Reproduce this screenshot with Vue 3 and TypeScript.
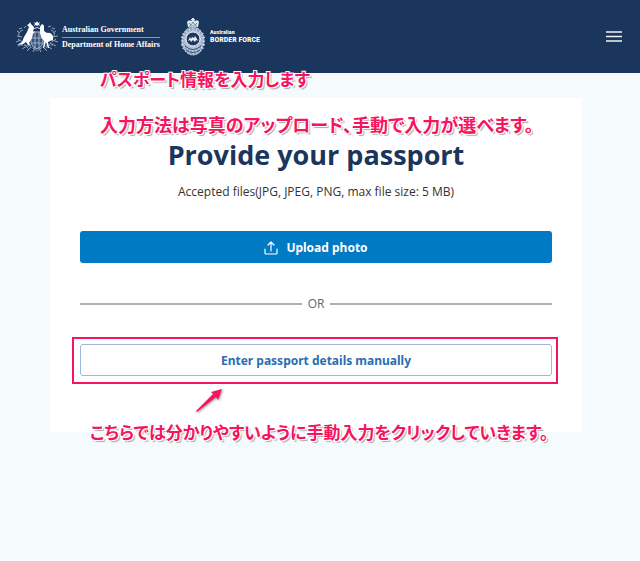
<script setup lang="ts">
import { ref } from 'vue'

const menuOpen = ref(false)
const beads: number[] = Array.from({ length: 20 }, (_, i) => i * 18)
</script>

<template>
  <div class="page">
    <header class="header">
      <div class="brands">
        <a class="brand gov" href="#">
          <svg class="crest" viewBox="0 0 44 34" aria-hidden="true">
            <g fill="none" stroke="#8fa4c0" stroke-width="1">
              <path d="M8 10c-3 1-5 3-4 6M5 13l-3-2M7 17l-5-1M6 20l-5 2M9 23l-6 3M12 26l-5 3M16 27l-4 4M20 28l-2 4M36 10c3 1 4 3 3 6M38 13l3-2M37 17l6-1M37 20l6 2M35 23l6 3M32 26l5 3M28 27l4 4M24 28l2 4" />
              <path d="M3 19c5 3 8 6 11 11M41 19c-5 3-8 6-11 11M6 25c6 0 11 2 16 6c5-4 10-6 16-6" stroke-dasharray="2 1" />
              <path d="M4 9l3-1M37 8l3 1M9 8l2-2M33 7l3-1" />
            </g>
            <path d="M16 12h12v11q-1 4-6 6q-5-2-6-6z" fill="#35527c" stroke="#b8c5d6" />
            <path d="M20 12v16M24 12v16M16 18h12M17 23h10" stroke="#9fb2cb" />
            <path d="M22 1l1 2 2-1-1 2 1 2-2-1-1 1-1-1-2 1 1-2-1-2 2 1z" fill="#fff" />
            <path d="M18 9q4-3 8 0" stroke="#c9d5e4" fill="none" />
            <path d="M16 4l-1-2-1 2-2 1 2 2-2 5-3 5-2 5-5 3 6-1 3-2 2 3 3 1-2-3 3-5 1-4 2-3-2 1 1-5z" fill="#fff" />
            <path d="M26 5q2-2 3 1v5l3 2c4-1 7 2 6 7l-3 1-2 1 1 6h-1l-2-6-2 6h-1l1-7-3-4-1-4V7z" fill="#fff" />
          </svg>
          <span class="gov-text">
            <span class="gov-line">Australian Government</span>
            <span class="gov-line dept">Department of Home Affairs</span>
          </span>
        </a>
        <a class="brand force" href="#">
          <svg class="badge" viewBox="0 0 24 38" aria-hidden="true">
            <path d="M7 9L6 4q2-3 4-1l1-1h-1V1h1V0h2v1h1v1h-1l1 1q3-2 4 1l-1 5z" fill="#dce4ee" />
            <path d="M8 5l2 2 2-3 2 3 2-2M8 8h8" fill="none" stroke="#456188" stroke-width=".7" />
            <ellipse cx="12" cy="23" rx="11" ry="14" fill="#8ea3bf" />
            <g fill="none" stroke="#d5deea" stroke-width="1">
              <path v-for="angle in beads" :key="angle" d="M12 10v4" :transform="`rotate(${angle} 12 23)`" />
              <ellipse cx="12" cy="23" rx="11" ry="14" stroke-dasharray="2 1" />
            </g>
            <ellipse cx="12" cy="22" rx="9" ry="10" fill="#b3c2d5" />
            <circle cx="12" cy="21" r="7" fill="#1d3860" stroke="#f2f5f8" stroke-width="1" />
            <path d="M7 23l2-4 1 2 1-2 2 1 1-2 2 3 1 2-2-1-1 2-2-2-2 2-1-2z" fill="#eef2f6" />
            <path d="M4 28q8 7 16 0M5 32q7 5 14 0" fill="none" stroke="#38557e" />
          </svg>
          <span class="force-text">
            <span class="force-small">Australian</span>
            <span class="force-large">BORDER FORCE</span>
          </span>
        </a>
      </div>
      <button class="menu" type="button" aria-label="Menu" :aria-expanded="menuOpen" @click="menuOpen = !menuOpen">
        <svg viewBox="0 0 16 13" aria-hidden="true"><path d="M0 2h16M0 6.500h16M0 11h16" stroke="#f2f4f7" stroke-width="1.700" /></svg>
      </button>
    </header>

    <main class="main">
      <p class="note note-intro">パスポート情報を入力します</p>
      <section class="card">
        <p class="note note-method">入力方法は写真のアップロード、手動で入力が選べます。</p>
        <h1>Provide your passport</h1>
        <p class="hint">Accepted files(JPG, JPEG, PNG, max file size: 5 MB)</p>
        <button class="btn primary" type="button">
          <svg class="upload" viewBox="0 0 14 14" aria-hidden="true">
            <path d="M1 8v4q0 1 1 1h10q1 0 1-1V8M7 10V1M4 4l3-3 3 3" fill="none" stroke="#fff" stroke-width="1.200" stroke-linecap="round" stroke-linejoin="round" />
          </svg>
          Upload photo
        </button>
        <div class="divider"><span>OR</span></div>
        <div class="manual">
          <button class="btn outline" type="button">Enter passport details manually</button>
          <div class="frame"></div>
          <svg class="arrow" viewBox="0 0 28 26" aria-hidden="true">
            <path d="M1 23L18 6l-2-2L27 1l-4 11-2-3L2 24z" fill="#f5145f" />
          </svg>
        </div>
        <p class="note note-manual">こちらでは分かりやすいように手動入力をクリックしていきます。</p>
      </section>
    </main>
  </div>
</template>

<style>
body {
  margin: 0;
  background: #f5fafd;
}
</style>

<style scoped>
.page {
  min-height: 100vh;
  background: #f5fafd;
  font-family: "Open Sans", "Noto Sans", "Noto Sans CJK JP", sans-serif;
}
.header {
  display: flex;
  align-items: center;
  justify-content: space-between;
  height: 73px;
  box-sizing: border-box;
  padding: 0 18px 0 15px;
  background: #1b365d;
}
.brands,
.brand {
  display: flex;
  align-items: center;
}
.brands {
  gap: 21px;
}
.brand {
  color: #fff;
  text-decoration: none;
}
.gov {
  gap: 3px;
}
.crest {
  width: 44px;
  height: 34px;
}
.gov-text {
  display: flex;
  flex-direction: column;
  padding-top: 2px;
  font: bold 8px/14px "Liberation Serif", serif;
  white-space: nowrap;
}
.dept {
  border-top: 1px solid #8496b0;
}
.force {
  gap: 5px;
}
.badge {
  width: 24px;
  height: 38px;
}
.force-text {
  display: flex;
  flex-direction: column;
  font-family: "Roboto Condensed", Roboto, "Liberation Sans", sans-serif;
  font-weight: bold;
  white-space: nowrap;
}
.force-small {
  font-size: 6px;
  line-height: 6px;
}
.force-large {
  font-size: 8px;
  line-height: 9px;
}
.menu {
  width: 16px;
  padding: 0;
  border: 0;
  background: none;
  cursor: pointer;
}
.menu svg {
  display: block;
}
.main {
  position: relative;
  padding: 25px 58px 24px 50px;
}
.card {
  position: relative;
  padding: 36px 30px 56px;
  background: #fff;
  text-align: center;
}
h1 {
  margin: 0;
  color: #1b365d;
  font-size: 27px;
  line-height: 41px;
}
.hint {
  margin: 9px 0 31px;
  color: #333;
  font-size: 12px;
  line-height: 16px;
}
.btn {
  display: flex;
  align-items: center;
  justify-content: center;
  gap: 8px;
  width: 100%;
  height: 32px;
  box-sizing: border-box;
  padding: 1px 0 0;
  border-radius: 3px;
  font: bold 12px/16px "Noto Sans", "Open Sans", sans-serif;
  cursor: pointer;
}
.primary {
  border: 0;
  background: #007ac3;
  color: #fff;
}
.upload {
  width: 14px;
  height: 14px;
}
.outline {
  border: 1px solid #9dbadb;
  background: #fff;
  color: #2b6cb3;
}
.divider {
  display: flex;
  align-items: center;
  gap: 6px;
  margin: 32px 0;
  color: #666;
  font-size: 12px;
  line-height: 17px;
}
.divider::before,
.divider::after {
  content: "";
  flex: 1;
  height: 2px;
  background: #b0b2b1;
}
.manual {
  position: relative;
}
.frame {
  position: absolute;
  inset: -7px -6px -8px -8px;
  border: 2px solid #f5145f;
  pointer-events: none;
}
.arrow {
  position: absolute;
  top: 44px;
  left: 115px;
  width: 28px;
  height: 26px;
  filter: drop-shadow(1px 1px 1px #999);
}
.note {
  position: absolute;
  z-index: 1;
  margin: 0;
  color: #f5145f;
  font: bold 17px/24px "Noto Sans CJK JP", sans-serif;
  font-feature-settings: "palt";
  white-space: nowrap;
  text-shadow: -1px -1px 0 #fff, 1px -1px 0 #fff, -1px 1px 0 #fff, 1px 1px 0 #fff, 2px 2px 1px #aaa;
}
.note-intro {
  top: -6px;
  left: 100px;
}
.note-method {
  top: 14px;
  left: 50px;
  font-size: 18px;
}
.note-manual {
  bottom: -12px;
  left: 40px;
}
</style>
